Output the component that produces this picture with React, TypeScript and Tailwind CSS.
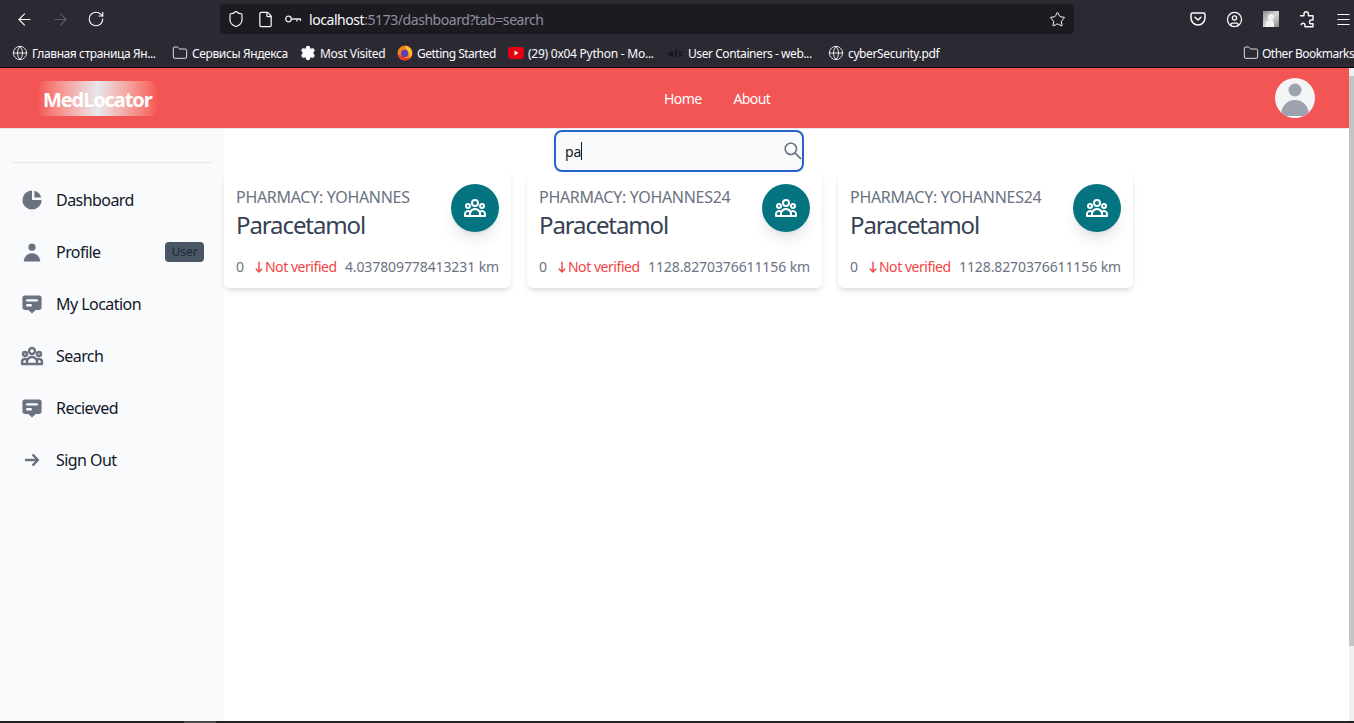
import { ArrowLeft, ArrowRight, RotateCw, Shield, File, Star, Globe, Folder, Menu, CircleUser, Settings } from 'lucide-react';
import { HiChartPie, HiUser, HiAnnotation, HiOutlineUserGroup, HiArrowSmRight, HiArrowNarrowDown } from 'react-icons/hi';
import { AiOutlineSearch } from 'react-icons/ai';

const KeyIcon = () => (
  <svg width="18" height="12" viewBox="0 0 18 12" fill="none" stroke="#e8e8ea" strokeWidth="1.3">
    <circle cx="4.5" cy="6" r="2.8" />
    <path d="M7.5 6H17M13 6v2.5M16.5 6v2" />
  </svg>
);

const PocketIcon = () => (
  <svg width="16" height="16" viewBox="0 0 16 16" fill="none" stroke="#fbfbfe" strokeWidth="1.5" strokeLinecap="round" strokeLinejoin="round">
    <path d="M2.5 2h11A1.5 1.5 0 0 1 15 3.5V7a7 7 0 0 1-14 0V3.5A1.5 1.5 0 0 1 2.5 2z" />
    <path d="M5 6.2 8 9l3-2.8" />
  </svg>
);

const ExtensionIcon = () => (
  <svg width="16" height="17" viewBox="0 0 16 17" fill="none" stroke="#fbfbfe" strokeWidth="1.4" strokeLinejoin="round">
    <path d="M1 5h4V3.2a2.2 2.2 0 0 1 4.4 0V5H14v4.2h-1.6a1.9 1.9 0 0 0 0 3.8H14v3H6v-1.6a1.9 1.9 0 0 0-3.8 0" transform="translate(0 -0.2)" />
  </svg>
);

const FirefoxIcon = () => (
  <svg width="16" height="16" viewBox="0 0 16 16">
    <circle cx="8" cy="8" r="7.5" fill="#f5801f" />
    <path d="M8 1a7 7 0 0 1 7 7c0 2-1 4-3 5 1-2 1-5-1-7-1-1-2-2-3-5z" fill="#fcc62f" />
    <circle cx="7.6" cy="8.4" r="3.6" fill="#5b3fb5" />
    <path d="M1 9c1 4 5 6 8 6 2 0 4-1 5-3-2 1-5 2-8 0-2-1-3-2-5-3z" fill="#e8312f" />
  </svg>
);

const YoutubeIcon = () => (
  <svg width="16" height="12" viewBox="0 0 16 12">
    <rect width="16" height="12" rx="3" fill="#e60012" />
    <path d="M6.5 3.5v5l4-2.5z" fill="#fff" />
  </svg>
);

const AlxIcon = () => (
  <svg width="16" height="10" viewBox="0 0 16 10" fill="#17161c">
    <circle cx="3" cy="6" r="2.5" />
    <rect x="7" y="1" width="1.6" height="8" />
    <path d="M10 3l4 6h1.8l-4-6zM15.8 3l-4 6H10l4-6z" />
  </svg>
);

const bookmarks = [
  { icon: <Globe size={16} strokeWidth={1.3} />, label: 'Главная страница Ян...', width: 'w-[160px]', track: 'tracking-[-0.4px]' },
  { icon: <Folder size={16} strokeWidth={1.3} />, label: 'Сервисы Яндекса', width: 'w-[128px]', track: 'tracking-[-0.38px]' },
  { icon: <Settings size={16} strokeWidth={2} fill="#fbfbfe" stroke="#fbfbfe" />, label: 'Most Visited', width: 'w-[97px]', track: 'tracking-[-0.3px]' },
  { icon: <FirefoxIcon />, label: 'Getting Started', width: 'w-[111px]', track: 'tracking-[-0.5px]' },
  { icon: <YoutubeIcon />, label: '(29) 0x04 Python - Mo...', width: 'w-[160px]', track: 'tracking-[-0.25px]' },
  { icon: <AlxIcon />, label: 'User Containers - web...', width: 'w-[160px]', track: 'tracking-[-0.43px]' },
  { icon: <Globe size={16} strokeWidth={1.3} />, label: 'cyberSecurity.pdf', width: 'w-[120px]', track: 'tracking-[-0.38px]' },
];

const sideItems = [
  { icon: <HiChartPie size={26} />, label: 'Dashboard' },
  { icon: <HiUser size={26} />, label: 'Profile', badge: 'User' },
  { icon: <HiAnnotation size={26} />, label: 'My Location' },
  { icon: <HiOutlineUserGroup size={26} strokeWidth={2.4} />, label: 'Search' },
  { icon: <HiAnnotation size={26} />, label: 'Recieved' },
  { icon: <HiArrowSmRight size={26} />, label: 'Sign Out' },
];

const results = [
  { pharmacy: 'Pharmacy: Yohannes', km: '4.037809778413231 km', width: 'w-[287px]' },
  { pharmacy: 'Pharmacy: Yohannes24', km: '1128.8270376611156 km', width: 'w-[295px]' },
  { pharmacy: 'Pharmacy: Yohannes24', km: '1128.8270376611156 km', width: 'w-[295px]' },
];

export default function App() {
  return (
    <div className="h-screen overflow-hidden flex flex-col bg-white font-['Noto_Sans','Liberation_Sans',sans-serif]">
      {/* Browser toolbar */}
      <div className="h-[38px] shrink-0 bg-[#2b2a33] flex items-center text-[#fbfbfe]">
        <div className="w-[220px] flex items-center pl-[15px] gap-[17px]">
          <ArrowLeft size={19} strokeWidth={1.4} />
          <ArrowRight size={19} strokeWidth={1.4} className="text-[#5f5e66]" />
          <RotateCw size={18} strokeWidth={1.5} />
        </div>
        <div className="w-[854px] h-[30px] bg-[#1c1b22] rounded flex items-center pl-[7px] pr-[8px]">
          <Shield size={18} strokeWidth={1.5} />
          <File size={17} strokeWidth={1.7} className="ml-[12px]" />
          <span className="ml-[10px]"><KeyIcon /></span>
          <span className="ml-[7px] pt-[1px] text-[14px] leading-none tracking-[-0.44px]">
            localhost<span className="text-[#8f8f9d]">:5173/dashboard?tab=search</span>
          </span>
          <Star size={17} strokeWidth={1.4} className="ml-auto" />
        </div>
        <div className="flex-1 flex items-center pl-[116px] gap-[20px]">
          <PocketIcon />
          <CircleUser size={17} strokeWidth={1.8} />
          <div className="relative w-4 h-4 bg-gradient-to-br from-[#8c8c8c] via-[#d8d8d8] to-[#8a8a8a] overflow-hidden">
            <div className="absolute left-[5px] top-[3px] w-[6px] h-[6px] rounded-full bg-[#f2f2f2]" />
            <div className="absolute left-[3px] top-[9px] w-[8px] h-[7px] rounded-t bg-[#f2f2f2]" />
          </div>
          <ExtensionIcon />
          <Menu size={17} strokeWidth={1.5} />
        </div>
      </div>

      {/* Bookmarks */}
      <div className="h-[30px] shrink-0 bg-[#2b2a33] border-b border-black flex items-center pl-[12px] text-[12px] text-[#fbfbfe] whitespace-nowrap">
        {bookmarks.map((b) => (
          <div key={b.label} className={`${b.width} flex items-center gap-[4px]`}>
            <span className="w-4 flex justify-center shrink-0">{b.icon}</span>
            <span className={`${b.track} pt-[2px]`}>{b.label}</span>
          </div>
        ))}
        <div className="ml-auto flex items-center gap-[3px] w-[111px] shrink-0">
          <Folder size={16} strokeWidth={1.3} className="shrink-0" />
          <span className="tracking-[-0.5px] pt-[2px]">Other Bookmarks</span>
        </div>
      </div>

      <div className="flex-1 min-h-0 flex">
        <div className="flex-1 min-w-0 flex flex-col">
          {/* App navbar */}
          <header className="h-[61px] shrink-0 bg-[#f35454] border-b border-gray-200 flex items-center pl-[37px] pr-[34px]">
            <div className="w-[121px] h-[35px] rounded-lg bg-gradient-to-r from-[#f35454] via-[#e5e7eb] to-[#f35454] flex items-center pl-[6px] pt-[3px] text-[20px] font-bold text-white tracking-[-1.1px]">
              MedLocator
            </div>
            <nav className="ml-[506px] flex gap-8 text-white text-[14px] tracking-[-0.6px]">
              <span>Home</span>
              <span>About</span>
            </nav>
            <div className="ml-auto w-10 h-10 rounded-full bg-gray-100 overflow-hidden flex items-end justify-center">
              <svg width="40" height="40" viewBox="0 0 40 40" fill="#9ca3af">
                <circle cx="20" cy="12" r="6.5" />
                <path d="M6 38c0-10 6-16 14-16s14 6 14 16z" />
              </svg>
            </div>
          </header>

          <div className="flex-1 min-h-0 flex">
            {/* Sidebar */}
            <aside className="w-[224px] shrink-0 bg-gray-50 px-3 pt-[33px]">
              <div className="border-t border-gray-200 pt-[11px]">
                {sideItems.map((item) => (
                  <div key={item.label} className="h-[52px] flex items-center px-2 text-gray-900">
                    <span className="text-gray-500 w-6 flex justify-center shrink-0">{item.icon}</span>
                    <span className="ml-3 text-[16px] tracking-[-0.55px]">{item.label}</span>
                    {item.badge && (
                      <span className="ml-auto w-[39px] h-5 rounded bg-gray-600 text-gray-800 text-[12px] flex items-center justify-center">
                        {item.badge}
                      </span>
                    )}
                  </div>
                ))}
              </div>
            </aside>

            {/* Content */}
            <main className="flex-1 min-w-0 flex flex-col">
              <div className="pt-[1px] pl-[330px]">
                <div className="w-[250px] h-[42px] rounded-lg border-2 border-[#2563c9] bg-gray-50 flex items-center pl-[9px] text-[14px] text-gray-900">
                  <span>pa</span>
                  <span className="w-px h-[18px] bg-gray-900" />
                  <AiOutlineSearch size={22} className="ml-auto -mr-[2px] text-gray-500" />
                </div>
              </div>
              <div className="flex gap-4 items-start">
                {results.map((r, i) => (
                  <div key={i} className={`${r.width} h-[116px] rounded-md bg-white shadow-md p-3 flex flex-col gap-[15px]`}>
                    <div className="flex justify-between">
                      <div className="pt-[1px]">
                        <div className="text-[16px] leading-6 uppercase text-gray-500 tracking-[-0.3px]">{r.pharmacy}</div>
                        <div className="text-[24px] leading-8 text-gray-700 tracking-[-1.1px]">Paracetamol</div>
                      </div>
                      <div className="w-12 h-12 rounded-full bg-[#047481] text-white flex items-center justify-center shadow-lg">
                        <HiOutlineUserGroup size={24} />
                      </div>
                    </div>
                    <div className="flex items-center text-[14px] text-gray-500 tracking-[-0.1px] whitespace-nowrap">
                      <span className="mr-[10px]">0</span>
                      <span className="flex items-center text-[#ef4444] tracking-[-0.45px]">
                        <span className="w-[11px] flex justify-center">
                          <HiArrowNarrowDown size={14} className="shrink-0" />
                        </span>
                        Not verified
                      </span>
                      <span className="ml-auto">{r.km}</span>
                    </div>
                  </div>
                ))}
              </div>
            </main>
          </div>
        </div>

        {/* Page scrollbar */}
        <div className="w-[5px] shrink-0 bg-[#f0f0f0] flex flex-col">
          <div className="h-[8px]" />
          <div className="h-[570px] bg-[#c4c4c4]" />
        </div>
      </div>

      {/* Bottom edge */}
      <div className="h-[2px] shrink-0 bg-[#222222] flex">
        <div className="w-[184px]" />
        <div className="w-[32px] bg-[#4a4a4a]" />
      </div>
    </div>
  );
}
